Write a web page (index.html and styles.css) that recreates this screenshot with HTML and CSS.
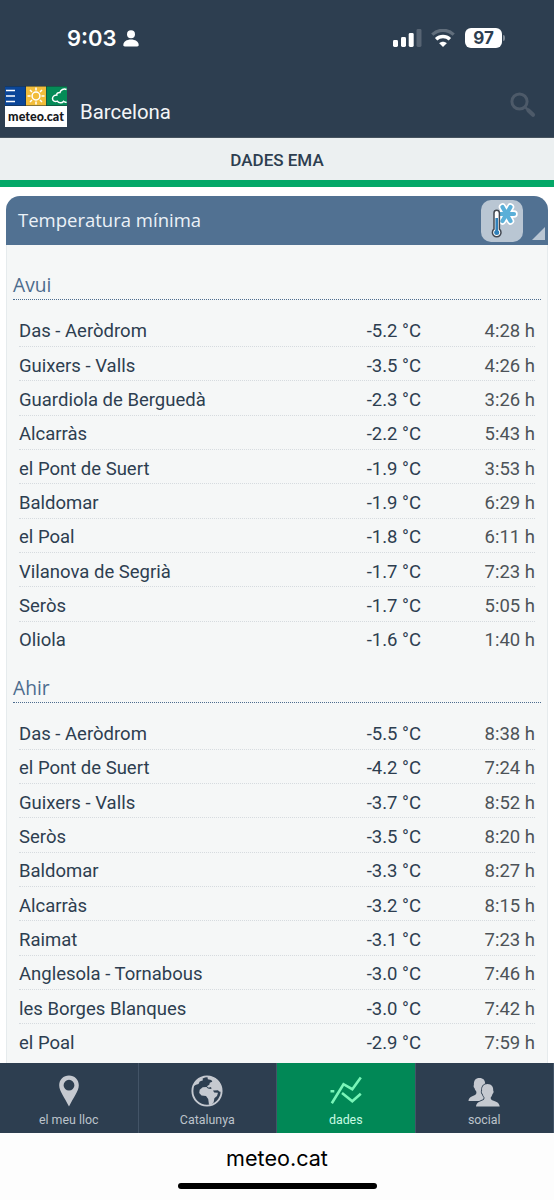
FILE: index.html
```html
<!DOCTYPE html>
<html lang="ca">
<head>
  <meta charset="UTF-8" />
  <meta name="viewport" content="width=device-width, initial-scale=1.0"/>
  <title>Meteocat - Dades EMA</title>
  <link rel="stylesheet" href="styles.css">
</head>
<body>
  <!-- Status bar -->
  <div class="status-bar">
    <div class="status-time">
      <span>9:03</span>
      <svg width="16" height="17" viewBox="0 0 16 17" fill="#fff">
        <circle cx="8" cy="4.2" r="4"/>
        <path d="M.3 15C.3 11.8 3.8 9.6 8 9.6s7.7 2.2 7.7 5.4c0 1-.6 1.4-1.5 1.4H1.8C.9 16.4.3 16 .3 15z"/>
      </svg>
    </div>
    <div class="status-icons">
      <svg width="29" height="18" viewBox="0 0 29 18" fill="#fff">
        <rect x="0" y="11" width="5" height="7" rx="1.4"/>
        <rect x="8" y="8" width="5" height="10" rx="1.4"/>
        <rect x="15.7" y="4" width="5" height="14" rx="1.4"/>
        <rect x="23.5" y="0" width="5" height="18" rx="1.4" opacity=".2"/>
      </svg>
      <svg class="wifi" width="24" height="18" viewBox="0 0 24 18" fill="none" stroke="#fff">
        <path d="M1.3 5.7C7.5-.2 16.5-.2 22.7 5.7" stroke-width="3.2" opacity=".25"/>
        <path d="M5.1 10.2c4-3.7 9.8-3.7 13.8 0" stroke-width="3.4"/>
        <path d="M8.2 14.3c2.2-2 5.4-2 7.6 0L12 18z" fill="#fff" stroke="none"/>
      </svg>
      <div class="battery">97</div>
    </div>
  </div>

  <!-- Header -->
  <header class="header">
    <div class="logo">
      <svg width="62" height="20" viewBox="0 0 62 20" fill="none" stroke="#fff" stroke-width="1.5">
        <rect width="62" height="20" fill="#1f2c33" stroke="none"/>
        <rect y=".5" width="20.5" height="19" fill="#0b4698" stroke="none"/>
        <rect x="21" y=".5" width="20" height="19" fill="#f2bd3a" stroke="none"/>
        <rect x="41.5" y=".5" width="20.5" height="19" fill="#058b57" stroke="none"/>
        <path d="M1 4.5h9M1 10h9M1 15.5h9" stroke-width="1.7"/>
        <circle cx="31" cy="10" r="3.9"/>
        <path d="M31 1.5v3M31 15.5v3M22.500 10h3M36.500 10h3M25 4l2 2M35 14l2 2M25 16l2-2M35 6l2-2"/>
        <path d="M61.5 3.500c-2.500-1.200-6 .2-6.500 2.900-2.200-.1-3.600 1-3.200 2.700-2.300 0-4.300 1.500-4.300 3.500 0 2.500 2.500 3.500 4.800 2.500 1.500 2.200 5 2.200 6.200.2 1 .9 2 1.200 3 .7"/>
      </svg>
      <span>meteo.cat</span>
    </div>
    <h1>Barcelona</h1>
    <svg class="search" width="26" height="26" viewBox="0 0 26 26" fill="none" stroke="#4d5a69">
      <circle cx="9.5" cy="9.5" r="7.6" stroke-width="3"/>
      <path d="M15.2 15.2l3 3" stroke-width="2.5"/>
      <path d="M18.5 18.5l4.5 4.200" stroke-width="4.2" stroke-linecap="round"/>
    </svg>
  </header>

  <div class="tab">DADES EMA</div>

  <!-- Content -->
  <main class="panel">
    <div class="panel-header">
      <h2>Temperatura mínima</h2>
      <div class="panel-icon">
        <svg width="42" height="42" viewBox="0 0 42 42" fill="none" stroke-linecap="round">
          <path d="M19 14h14M21.5 7l8 14M29.5 7l-8 14" stroke="#fff" stroke-width="7.5"/>
          <path d="M19 14h14M21.5 7l8 14M29.5 7l-8 14" stroke="#5aafd8" stroke-width="4.2"/>
          <path d="M13 13a2.7 2.7 0 0 1 5.4 0v16.200a4.300 4.300 0 1 1-5.4 0z" fill="#fff" stroke="#414750" stroke-width="1.5"/>
          <path d="M15.7 18v14" stroke="#2f80b9" stroke-width="2.6" stroke-linecap="butt"/>
          <circle cx="15.7" cy="32.5" r="2.5" fill="#2f80b9"/>
        </svg>
      </div>
      <span class="corner"></span>
    </div>

    <div class="panel-body">
      <section>
        <h3>Avui</h3>
        <ul class="list">
          <li><span>Das - Aeròdrom</span><span>-5.2 °C</span><time>4:28 h</time></li>
          <li><span>Guixers - Valls</span><span>-3.5 °C</span><time>4:26 h</time></li>
          <li><span>Guardiola de Berguedà</span><span>-2.3 °C</span><time>3:26 h</time></li>
          <li><span>Alcarràs</span><span>-2.2 °C</span><time>5:43 h</time></li>
          <li><span>el Pont de Suert</span><span>-1.9 °C</span><time>3:53 h</time></li>
          <li><span>Baldomar</span><span>-1.9 °C</span><time>6:29 h</time></li>
          <li><span>el Poal</span><span>-1.8 °C</span><time>6:11 h</time></li>
          <li><span>Vilanova de Segrià</span><span>-1.7 °C</span><time>7:23 h</time></li>
          <li><span>Seròs</span><span>-1.7 °C</span><time>5:05 h</time></li>
          <li><span>Oliola</span><span>-1.6 °C</span><time>1:40 h</time></li>
        </ul>
      </section>

      <section>
        <h3>Ahir</h3>
        <ul class="list">
          <li><span>Das - Aeròdrom</span><span>-5.5 °C</span><time>8:38 h</time></li>
          <li><span>el Pont de Suert</span><span>-4.2 °C</span><time>7:24 h</time></li>
          <li><span>Guixers - Valls</span><span>-3.7 °C</span><time>8:52 h</time></li>
          <li><span>Seròs</span><span>-3.5 °C</span><time>8:20 h</time></li>
          <li><span>Baldomar</span><span>-3.3 °C</span><time>8:27 h</time></li>
          <li><span>Alcarràs</span><span>-3.2 °C</span><time>8:15 h</time></li>
          <li><span>Raimat</span><span>-3.1 °C</span><time>7:23 h</time></li>
          <li><span>Anglesola - Tornabous</span><span>-3.0 °C</span><time>7:46 h</time></li>
          <li><span>les Borges Blanques</span><span>-3.0 °C</span><time>7:42 h</time></li>
          <li><span>el Poal</span><span>-2.9 °C</span><time>7:59 h</time></li>
        </ul>
      </section>
    </div>
  </main>

  <!-- Bottom navigation -->
  <nav class="bottom-nav">
    <a href="#">
      <svg width="32" height="32" viewBox="0 0 32 32" fill="#c5c9d0">
        <path fill-rule="evenodd" d="M16 .5c-5.500 0-9.800 4.200-9.800 9.700 0 6 5.200 11.800 9.800 21.300 4.600-9.500 9.800-15.300 9.800-21.300C25.800 4.700 21.500.5 16 .5zm0 4.300a5.400 5.400 0 1 1 0 10.800A5.400 5.400 0 0 1 16 4.800z"/>
      </svg>
      el meu lloc
    </a>
    <a href="#">
      <svg width="32" height="32" viewBox="0 0 32 32">
        <circle cx="16" cy="16" r="14.6" fill="none" stroke="#c5c9d0" stroke-width="1.9"/>
        <path fill="#c5c9d0" d="M2.5 11C4 6 7.500 3 11 2l3.500-.3-3 2 .5 1.500-3.300 1.300-1.200 2.500-2.500.7z"/>
        <path fill="#c5c9d0" d="M16.500 1.500c5-.3 9 1.700 11.500 5.200 2.300 3 3.200 6.700 2.800 10.300l-2.600-.4-1.200-1.300-5 .1 1.200 2 3.800.3-1 3.200-2.600 2.400-.8 4.300-2.600 2.400-2-.2-.8-5.800-2.200-3-4.500-.5-2.300-2.400.5-3.300 3-2.600 3.800-.3 1.500 1.700 2.500.5 1.300-.8-1.300-1.300-1.700.8-2-1.500 2.500-1.600.5-2 2.500-1-1-1.800-3.500-.6z"/>
      </svg>
      Catalunya
    </a>
    <a href="#" class="active">
      <svg width="32" height="32" viewBox="0 0 32 32" fill="none" stroke="#79f5b8" stroke-width="2.6">
        <path d="M1.8 28.2L13.5 9.2l8.8 5L30.8 2.5"/>
        <path d="M.5 16.3h3.8M12 18l10.3 8.200 8.500-7.500"/>
      </svg>
      dades
    </a>
    <a href="#">
      <svg width="32" height="32" viewBox="0 0 32 32" fill="#c5c9d0" stroke="#2d3e50">
        <path stroke="none" d="M11.500 3c3.800 0 5.700 2.300 5.700 6 .6.800.3 2.500-.5 3-.4 1.500-.9 2.300-1.600 3-.3 3 .6 3.600 3 5.200v5.800H.5c.3-3.500 2.800-4.300 6-5.700 2-.9 2.300-2 1.600-4.200-.8-.8-1.300-1.600-1.600-3-.9-.5-1.200-2.200-.6-3C5.700 5.500 7.500 3 11.500 3z"/>
        <path stroke-width="1.6" paint-order="stroke" d="M19.500 9c4.300 0 6 3 5.700 6.500.8.700.4 3-.7 3.500-.4 1.700-1 2.500-1.700 3.200-.3 2 .4 2.600 2.100 3.200 3.700 1.300 6.400 2.200 6.800 6.200H8c.4-4 3.100-4.900 6.400-6.200 1.600-.6 2.300-1.200 2-3.200-.8-.7-1.300-1.500-1.700-3.200-1-.5-1.500-2.800-.6-3.500C13.700 12 15.200 9 19.500 9z"/>
      </svg>
      social
    </a>
  </nav>

  <footer class="browser-bar">
    <span>meteo.cat</span>
    <div class="home-indicator"></div>
  </footer>
</body>
</html>
```

FILE: styles.css
```css
* {
  box-sizing: border-box;
  margin: 0;
  padding: 0;
}

body {
  font-family: Roboto, "Liberation Sans", sans-serif;
  background-color: #fff;
  color: #2d3e50;
  height: 1200px;
  display: flex;
  flex-direction: column;
  overflow: hidden;
}

svg {
  display: block;
  flex-shrink: 0;
}

/* Status bar */
.status-bar {
  height: 76px;
  padding: 0 52px 0 67px;
  display: flex;
  justify-content: space-between;
  align-items: center;
  background-color: #2d3e50;
  color: #fff;
  font-family: Inter, sans-serif;
}

.status-time {
  display: flex;
  align-items: center;
  gap: 6px;
  font-size: 22px;
  font-weight: 600;
}

.status-icons {
  display: flex;
  align-items: center;
}

.wifi {
  margin: 0 10px 0 9px;
}

.battery {
  position: relative;
  width: 37px;
  height: 20px;
  border-radius: 6px;
  background-color: #fff;
  color: #2d3e50;
  font-size: 17px;
  font-weight: 700;
  line-height: 20px;
  text-align: center;
}

.battery::after {
  content: "";
  position: absolute;
  top: 7px;
  right: -3px;
  width: 2px;
  height: 6px;
  border-radius: 0 2px 2px 0;
  background-color: #7f8a96;
}

/* Header */
.header {
  height: 62px;
  padding: 10px 18px 0 5px;
  display: flex;
  align-items: flex-start;
  background-color: #2d3e50;
  border-bottom: 1px solid #46535f;
}

.logo {
  width: 62px;
  height: 41px;
  background-color: #fff;
  overflow: hidden;
}

.logo span {
  display: block;
  font-family: Lato, sans-serif;
  font-size: 12.5px;
  font-weight: 900;
  line-height: 21px;
  text-align: center;
  color: #16181c;
}

.header h1 {
  flex: 1;
  margin: 14px 0 0 13px;
  font-size: 20.4px;
  font-weight: 400;
  line-height: 24px;
  color: #f3f5f7;
}

.search {
  margin-top: 6px;
}

.tab {
  height: 49px;
  padding-top: 1px;
  border-bottom: 7px solid #04a868;
  background-color: #ecf0f1;
  font-size: 17px;
  font-weight: 500;
  line-height: 43px;
  text-align: center;
}

/* Panel */
.panel {
  flex: 1;
  min-height: 0;
  margin: 9px 6px 0;
  display: flex;
  flex-direction: column;
  border-radius: 14px 14px 0 0;
  overflow: hidden;
}

.panel-header {
  height: 49px;
  padding: 0 2px 0 12px;
  display: flex;
  align-items: center;
  background-color: #517192;
}

.panel-header h2 {
  flex: 1;
  padding-bottom: 2px;
  font-family: "Open Sans", sans-serif;
  font-size: 18.5px;
  font-weight: 400;
  color: #ecf2f8;
}

.panel-icon {
  width: 42px;
  height: 42px;
  border-radius: 10px;
  background-color: #b9c6d3;
}

.corner {
  align-self: flex-end;
  width: 13px;
  height: 13px;
  margin: 0 1px 5px 9px;
  background-color: #b9c6d3;
  clip-path: polygon(100% 0, 100% 100%, 0 100%);
}

.panel-body {
  flex: 1;
  padding-top: 8px;
  border: solid #e6ebed;
  border-width: 0 1px;
  background-color: #f5f7f7;
}

.panel h3 {
  height: 47px;
  margin: 0 6px 12.6px;
  padding-top: 19px;
  border-bottom: 1px dotted #4c6c8e;
  font-family: "Open Sans", sans-serif;
  font-size: 19.2px;
  font-weight: 400;
  line-height: 26px;
  color: #4c6c8e;
}

.list {
  margin: 0 12px;
  list-style: none;
}

.list li {
  height: 34.33px;
  padding-top: 4px;
  display: grid;
  grid-template-columns: 1fr 120px 114px;
  align-items: center;
  border-bottom: 1px dotted #d6dbdf;
  font-size: 18.5px;
}

.list li:last-child {
  border-bottom-color: transparent;
}

.list li span + span,
.list time {
  text-align: right;
}

.list time {
  color: #4d5358;
}

/* Bottom navigation */
.bottom-nav {
  height: 70px;
  display: grid;
  grid-template-columns: repeat(4, 1fr);
  background-color: #2d3e50;
}

.bottom-nav a {
  padding-top: 12px;
  display: flex;
  flex-direction: column;
  align-items: center;
  gap: 4px;
  border-right: 1px solid #435467;
  color: #bcc3cb;
  font-size: 12.4px;
  line-height: 17px;
  text-decoration: none;
}

.bottom-nav .active {
  background-color: #018856;
  color: #c8fbe3;
}

.browser-bar {
  height: 67px;
  padding-top: 11px;
  display: flex;
  flex-direction: column;
  align-items: center;
  background-color: #fdfdfd;
  color: #000;
  font-family: Inter, sans-serif;
  font-size: 21.6px;
  line-height: 28px;
}

.home-indicator {
  width: 199px;
  height: 6px;
  margin-top: 11px;
  border-radius: 3px;
  background-color: #000;
}
```
